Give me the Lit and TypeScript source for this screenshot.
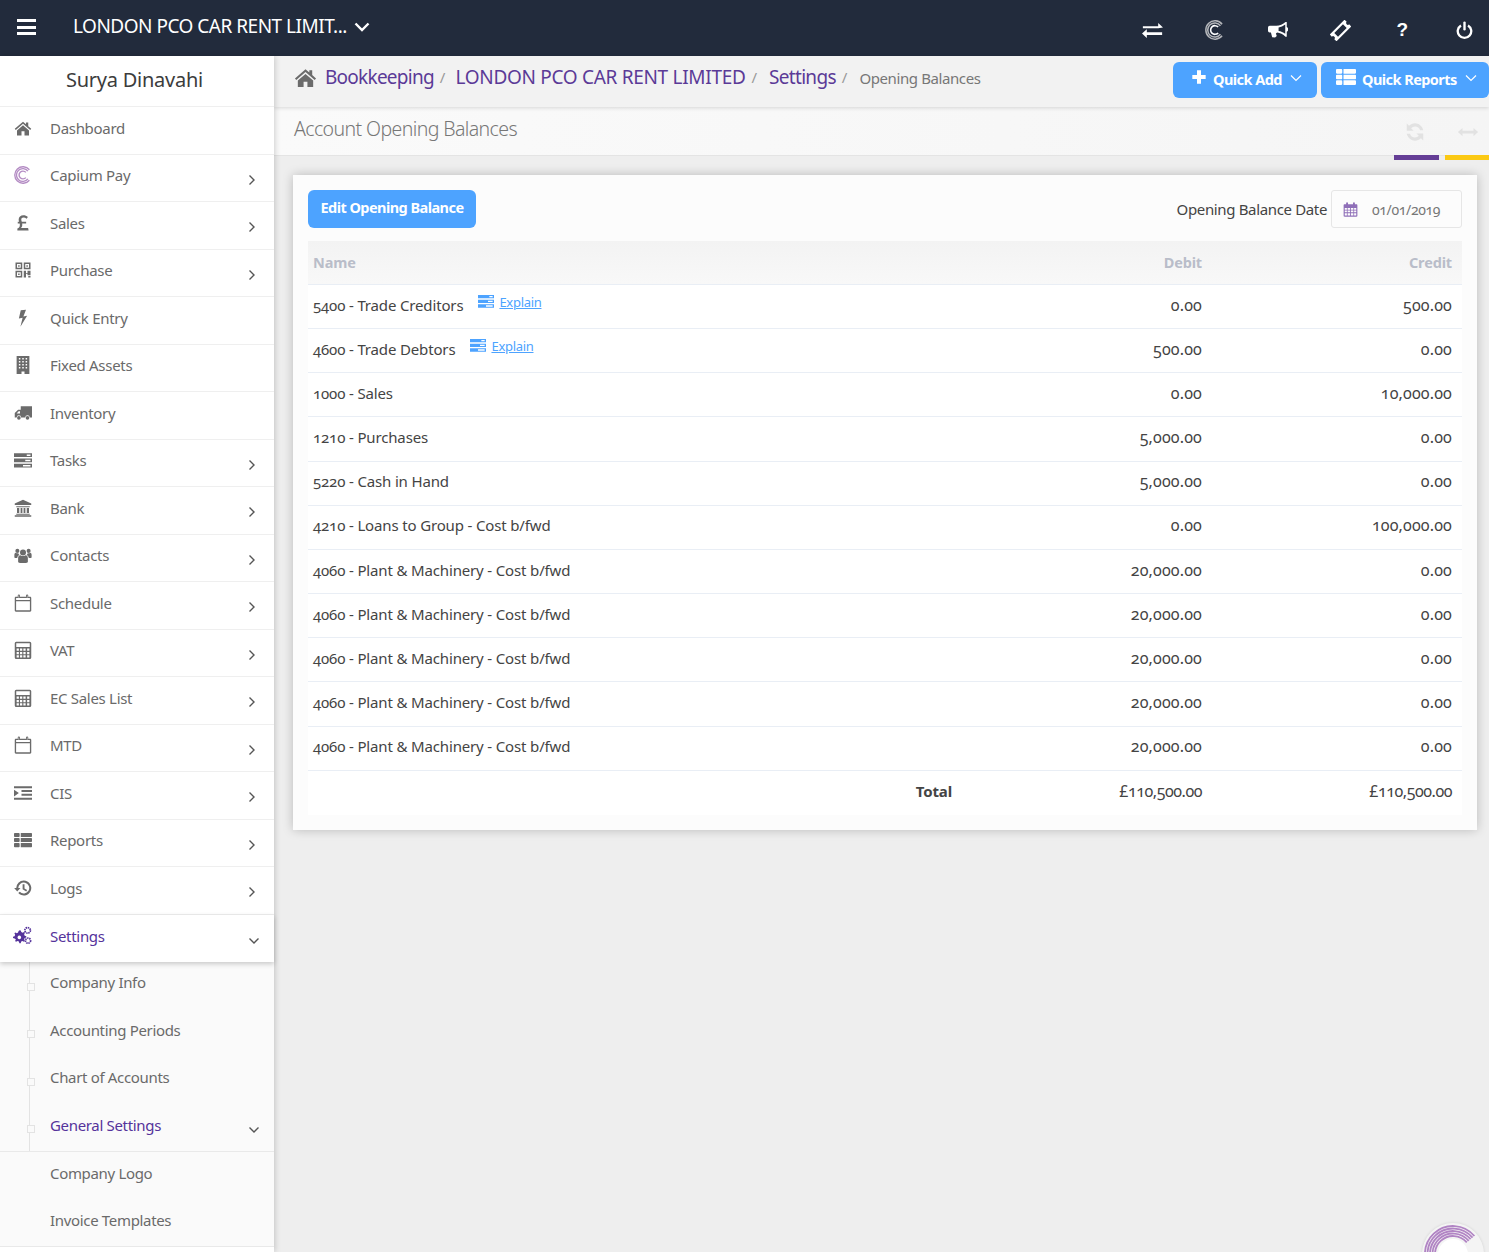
import { LitElement, html, css, svg } from "lit";
import { customElement } from "lit/decorators.js";

const ICONS: Record<string, any> = {
  home: svg`<path d="M12 3.500 1 13l1.400 1.600L12 6.300l9.600 8.300L23 13l-4-3.500V4.500h-3v2.400z"/><path d="M4 15.200V22h6v-5.600h4V22h6v-6.800L12 8.300z"/>`,
  pound: svg`<path d="M19.500 22H4.500v-2.600c2.200-.9 3.300-2.500 3.300-4.800 0-.6-.1-1.200-.2-1.800H5V10.400h1.900C6.500 9.300 6.200 8.400 6.200 7.500 6.200 4 8.900 1.800 12.500 1.800c2.400 0 4.400.8 6 2.100l-1.700 2.500c-1.300-1-2.700-1.600-4.100-1.600-1.900 0-3 1-3 2.600 0 .8.200 1.700.7 3h5.800v2.400h-5.300c.1.600.1 1.100.1 1.700 0 1.700-.7 3.100-1.900 4.200h9.700z"/>`,
  qr: svg`<path fill-rule="evenodd" d="M2 2h9v9H2zM4 4v5h5V4zM5.500 5.500h2v2h-2zM13 2h9v9h-9zM15 4v5h5V4zM16.500 5.500h2v2h-2zM2 13h9v9H2zM4 15v5h5v-5zM5.500 16.500h2v2h-2zM13 13h3v3h2v-3h4v6h-4v-2h-2v5h-3zM19 20h3v2h-3z"/>`,
  bolt: svg`<path d="M16 1 9 1.500 6.500 12.500l5-1L8.500 23.500 17.500 9l-5 1z"/>`,
  building: svg`<path fill-rule="evenodd" d="M3.500 0h17v24H14v-3.500h-4V24H3.500zM6.500 2.500v2h2v-2zM11 2.500v2h2v-2zM15.500 2.500v2h2v-2zM6.500 6.500v2h2v-2zM11 6.500v2h2v-2zM15.500 6.500v2h2v-2zM6.500 10.500v2h2v-2zM11 10.500v2h2v-2zM15.500 10.500v2h2v-2zM6.500 14.500v2h2v-2zM11 14.500v2h2v-2zM15.500 14.500v2h2v-2z"/>`,
  truck: svg`<path fill-rule="evenodd" d="M9 3h15v15h-3a3 3 0 0 0-6 0H9.500a3 3 0 0 0-6 0H1v-6l4.500-4.500H9zM3.500 12.500H8V9.500H6.200z"/><circle cx="6.500" cy="18.500" r="2.400"/><circle cx="18" cy="18.500" r="2.400"/>`,
  tasks: svg`<path fill-rule="evenodd" d="M0 3h24v5H0zM17 4.500v2h5v-2zM0 10h24v5H0zM15 11.500v2h7v-2zM0 17h24v5H0zM12 18.500v2h10v-2z"/>`,
  bank: svg`<path d="M12 1 1 6v2h22V6zM3 9.500h18V11H3zM4 12h3v6.500H4zM8.800 12h2.400v6.500H8.800zM12.800 12h2.400v6.500h-2.400zM17 12h3v6.500h-3zM3 19.500h18V21H3zM1 21.800h22V23.500H1z"/>`,
  users: svg`<circle cx="12" cy="8.500" r="4"/><circle cx="4.500" cy="6.500" r="2.700"/><circle cx="19.500" cy="6.500" r="2.700"/><path d="M5.500 21v-5c0-2.500 1.500-3.800 3.200-3.800 1 .8 2.100 1.200 3.300 1.200s2.300-.4 3.300-1.200c1.700 0 3.200 1.300 3.200 3.800v5c0 .8-1 1.500-2.500 1.500H8c-1.500 0-2.500-.7-2.500-1.500zM.5 11.500c0-1.500 1-2.600 2-2.600.6.500 1.300.8 2 .8.400 0 .8 0 1.200-.2.300 1 .9 1.800 1.500 2.400-1.500.6-2.700 2-2.900 4H1.500c-.6 0-1-.4-1-1zM23.500 11.500c0-1.500-1-2.600-2-2.600-.6.500-1.300.8-2 .8-.400 0-.8 0-1.200-.2-.3 1-.9 1.800-1.500 2.400 1.500.6 2.700 2 2.900 4h2.800c.6 0 1-.4 1-1z"/>`,
  cal: svg`<path fill-rule="evenodd" d="M5 2a1.500 1.500 0 0 1 3 0v1.500h8V2a1.500 1.500 0 0 1 3 0v1.500h2.500c.8 0 1.500.7 1.500 1.500v17c0 .8-.7 1.500-1.500 1.500h-19C1.700 23.500 1 22.800 1 22V5c0-.8.7-1.500 1.500-1.500H5zM2.800 5.300V8h18.400V5.300zM2.800 9.500v12.200h18.400V9.500zM6.200 2v3h.6V2zM17.200 2v3h.6V2z"/>`,
  calg: svg`<path fill-rule="evenodd" d="M5 2a1.500 1.500 0 0 1 3 0v1.500h8V2a1.500 1.500 0 0 1 3 0v1.500h2.500c.8 0 1.500.7 1.500 1.500v17c0 .8-.7 1.500-1.500 1.500h-19C1.700 23.500 1 22.800 1 22V5c0-.8.7-1.500 1.500-1.500H5zM2.800 9.500v2.700h3.400V9.500zM7.400 9.500v2.700h3.900V9.500zM12.700 9.500v2.700h3.900V9.500zM17.800 9.500v2.700h3.400V9.500zM2.800 13.500v3h3.400v-3zM7.400 13.500v3h3.900v-3zM12.700 13.500v3h3.900v-3zM17.800 13.500v3h3.400v-3zM2.800 17.800v3.900h3.400v-3.900zM7.400 17.800v3.900h3.900v-3.900zM12.700 17.800v3.900h3.900v-3.900zM17.800 17.800v3.900h3.400v-3.900z"/>`,
  calc: svg`<path fill-rule="evenodd" d="M3 1h18a2 2 0 0 1 2 2v19a2 2 0 0 1-2 2H3a2 2 0 0 1-2-2V3a2 2 0 0 1 2-2zM3 3v5h18V3zM3.500 10v3h3v-3zM8 10v3h3v-3zM12.500 10v3h3v-3zM17.500 10v3h3v-3zM3.500 14.500v3h3v-3zM8 14.500v3h3v-3zM12.500 14.500v3h3v-3zM17.500 14.500v3h3v-3zM3.500 19v3h3v-3zM8 19v3h3v-3zM12.500 19v3h3v-3zM17.500 19v3h3v-3z"/>`,
  indent: svg`<path d="M0 3h24v2.800H0zM10 8h14v2.800H10zM10 13h14v2.800H10zM0 18.300h24v2.800H0zM0 7.500l6.500 4.500L0 16.500zM0 8h1v8H0z"/>`,
  list: svg`<path d="M0 3.500c0-.5.500-1 1-1h5.500c.5 0 1 .5 1 1v3.500c0 .5-.5 1-1 1H1c-.5 0-1-.5-1-1zM9 2.500h14c.5 0 1 .5 1 1v3.500c0 .5-.5 1-1 1H9zM0 10.200c0-.5.500-1 1-1h5.500c.5 0 1 .5 1 1v3.500c0 .5-.5 1-1 1H1c-.5 0-1-.5-1-1zM9 9.200h14c.5 0 1 .5 1 1v3.500c0 .5-.5 1-1 1H9zM0 17c0-.5.500-1 1-1h5.500c.5 0 1 .5 1 1v3.500c0 .5-.5 1-1 1H1c-.5 0-1-.5-1-1zM9 16h14c.5 0 1 .5 1 1v3.500c0 .5-.5 1-1 1H9z"/>`,
  history: svg`<path d="M13 2a10 10 0 1 1-7.300 16.800l2-1.800A7.300 7.300 0 1 0 5.700 12h2.900L4.300 16.500.2 12h2.800A10 10 0 0 1 13 2z"/><path d="M11.500 7H14v5.500l3.500 2-1.200 2-4.800-2.800z"/>`,
  cogs: svg`<path fill-rule="evenodd" d="M8.500 5.500l1.300.2.700 2 1.500.7 2-.8 1 1-.9 2 .7 1.600 2 .7v1.600l-2 .7-.7 1.600.9 2-1.100 1.100-2-.9-1.500.7-.7 2-1.600 0-.7-2-1.600-.7-2 .9-1.100-1.100.9-2L2 15.800l-2-.7v-1.600l2-.7.700-1.600-.9-2 1.100-1.100 2 .9 1.500-.7.7-2zM8 12a2.300 2.300 0 1 0 .01 0z"/><circle cx="18.500" cy="5.500" r="3.500" fill="none" stroke="currentColor" stroke-width="2.200" stroke-dasharray="1.800 .9"/><circle cx="19" cy="18.500" r="3.200" fill="none" stroke="currentColor" stroke-width="2.200" stroke-dasharray="1.800 .9"/>`,
  exchange: svg`<path d="M1 7h17.500V3.500L24 8.500 18.500 9.500H1zM23 14H5.500v-3.500L0 15.500l5.500 5V17H23z"/>`,
  bullhorn: svg`<path fill-rule="evenodd" d="M22.500 2.500v6a3 3 0 0 1 0 5.500v6h-1.500c-3-3-6.500-4.500-10-5l-1.500 1.300 1 3-2 1.700-3.500-.4-1.500-5.600H2a2 2 0 0 1-2-2V9a2 2 0 0 1 2-2h8c4-.3 8-1.800 11-4.500zM20.700 5.500c-2.600 2-5.200 3-8 3.400v4.200c2.800.4 5.400 1.500 8 3.400z"/>`,
  ticket: svg`<path fill-rule="evenodd" transform="rotate(-45 12 12)" d="M0 6.500h24v3.500a2 2 0 0 0 0 4v3.500H0V14a2 2 0 0 0 0-4zM5 9v6h14V9z"/>`,
  power: svg`<path d="M6.800 4.300a10 10 0 1 0 10.400 0l-1.500 2.500a7.100 7.100 0 1 1-7.400 0z"/><rect x="10.500" y="0.500" width="3" height="11.500" rx="1.500"/>`,
  plus: svg`<path d="M9 2h6v7h7v6h-7v7H9v-7H2V9h7z"/>`,
  refresh: svg`<path d="M21 10C20 5.500 16 2.500 12 2.500c-2.500 0-4.700 1-6.500 2.700L3 2.700V10.500h7.500L7.800 7.800A6.500 6.500 0 0 1 12 6c2.700 0 5 1.500 5.500 4zM3 14c1 4.500 5 7.500 9 7.500 2.500 0 4.700-1 6.500-2.700l2.500 2.500V13.500h-7.500l2.700 2.700A6.500 6.500 0 0 1 12 18c-2.700 0-5-1.500-5.500-4z"/>`,
  arrows: svg`<path d="M1 12l5-4.500v3h12v-3l5 4.500-5 4.500v-3H6v3z"/>`,
};

const capium = (size: number, color: string, inner: string) => html`<svg width=${size} height=${size} viewBox="0 0 24 24" fill="none" stroke=${color}>
  <path d="M20.500 5A11 11 0 1 0 20.500 19" stroke-width="1.800"/>
  <path d="M18.500 6.800A8.500 8.500 0 1 0 18.500 17.200" stroke-width="1.800"/>
  <path d="M15.800 8.500A5.200 5.200 0 1 0 15.800 15.500" stroke-width="1.900" stroke=${inner}/>
</svg>`;

const icon = (name: string, size = 18, cls = "") =>
  html`<svg class=${cls} width=${size} height=${size} viewBox="0 0 24 24" fill="currentColor" aria-hidden="true">${ICONS[name]}</svg>`;

const chev = (down = false) =>
  html`<svg class="chev" width="12" height="12" viewBox="0 0 12 12" fill="none" stroke="currentColor" stroke-width="1.400"><path d=${down ? "M1.500 3.500 6 8l4.500-4.500" : "M3.500 1.500 8 6l-4.500 4.500"}/></svg>`;

const MENU: [string, string, boolean][] = [
  ["home", "Dashboard", false],
  ["cap", "Capium Pay", true],
  ["pound", "Sales", true],
  ["qr", "Purchase", true],
  ["bolt", "Quick Entry", false],
  ["building", "Fixed Assets", false],
  ["truck", "Inventory", false],
  ["tasks", "Tasks", true],
  ["bank", "Bank", true],
  ["users", "Contacts", true],
  ["cal", "Schedule", true],
  ["calc", "VAT", true],
  ["calc", "EC Sales List", true],
  ["cal", "MTD", true],
  ["indent", "CIS", true],
  ["list", "Reports", true],
  ["history", "Logs", true],
];

const ROWS: [string, string, string, boolean][] = [
  ["5400 - Trade Creditors", "0.00", "500.00", true],
  ["4600 - Trade Debtors", "500.00", "0.00", true],
  ["1000 - Sales", "0.00", "10,000.00", false],
  ["1210 - Purchases", "5,000.00", "0.00", false],
  ["5220 - Cash in Hand", "5,000.00", "0.00", false],
  ["4210 - Loans to Group - Cost b/fwd", "0.00", "100,000.00", false],
  ["4060 - Plant & Machinery - Cost b/fwd", "20,000.00", "0.00", false],
  ["4060 - Plant & Machinery - Cost b/fwd", "20,000.00", "0.00", false],
  ["4060 - Plant & Machinery - Cost b/fwd", "20,000.00", "0.00", false],
  ["4060 - Plant & Machinery - Cost b/fwd", "20,000.00", "0.00", false],
  ["4060 - Plant & Machinery - Cost b/fwd", "20,000.00", "0.00", false],
];

@customElement("app-root")
export class AppRoot extends LitElement {
  static styles = css`
    :host {
      display: block;
      height: 1252px;
      overflow: hidden;
      position: relative;
      background: #eeeeee;
      font-family: "Noto Sans", "Open Sans", sans-serif;
      font-variant-numeric: oldstyle-nums;
      color: #444;
      font-size: 15px;
    }
    * { box-sizing: border-box; }
    .top {
      height: 56px;
      background: #222b3c;
      color: #fff;
      display: flex;
      align-items: center;
      padding-left: 17px;
    }
    .burger { display: flex; flex-direction: column; gap: 3.500px; width: 19px; margin-right: 37px; margin-bottom: 2px; }
    .burger i { display: block; height: 3px; background: #fff; }
    .co { font-size: 19px; letter-spacing: -0.5px; white-space: nowrap; padding-bottom: 4px; }
    .cochev { margin-left: 7px; display: flex; padding-bottom: 3px; }
    .topicons { margin-left: auto; margin-right: -7px; display: flex; align-items: center; padding-top: 4px; }
    .topicons > span { width: 62.400px; display: flex; justify-content: center; }
    .q { font-family: "Liberation Sans", sans-serif; font-weight: 700; font-size: 19px; line-height: 20px; }

    .body { display: flex; height: 1196px; }
    .side {
      width: 274px;
      flex: none;
      background: #fff;
      box-shadow: 1px 0 6px rgba(0,0,0,.18);
      position: relative;
      z-index: 2;
    }
    .user {
      height: 51px;
      display: flex;
      align-items: center;
      justify-content: center;
      font-size: 20px;
      letter-spacing: -0.25px;
      color: #3c3c3c;
      border-bottom: 1px solid #efefef;
      padding: 0 5px 3px 0;
    }
    .item {
      height: 47.500px;
      border-bottom: 1px solid #efefef;
      display: flex;
      align-items: center;
      color: #6a6a6a;
      font-size: 15px;
      letter-spacing: -0.3px;
      padding-bottom: 5px;
      position: relative;
    }
    .ic { width: 50px; padding-right: 5px; flex: none; display: flex; justify-content: center; color: #6b6b6b; }
    .item .chev, .sub .chev { position: absolute; left: 246px; top: 19px; color: #555; }
    .item.open { color: #55339b; border: 0; box-shadow: 0 2px 5px rgba(0,0,0,.2); height: 47px; z-index: 1; }
    .item.open .ic { color: #55339b; }
    .item.open .chev, .sub .chev { left: 248px; top: 20px; }
    .subs { background: #fafafa; position: relative; }
    .subs::before { content: ""; position: absolute; left: 29px; top: 0; height: 190px; width: 1px; background: #e3e3e3; }
    .sub {
      height: 47.600px;
      display: flex;
      align-items: center;
      padding-left: 50px;
      padding-bottom: 6px;
      color: #6a6a6a;
      letter-spacing: -0.33px;
      position: relative;
    }
    .sub.dot::before { content: ""; position: absolute; left: 27px; top: 21px; width: 6px; height: 6px; border: 1px solid #e3e3e3; background: #fafafa; }
    .sub.active { color: #55339b; border-bottom: 1px solid #e9e9e9; }
    .sub.end { border-bottom: 1px solid #e9e9e9; }

    .main { flex: 1; min-width: 0; }
    .crumbbar {
      height: 51px;
      background: #f2f2f2;
      box-shadow: 0 1px 4px rgba(0,0,0,.14);
      display: flex;
      align-items: center;
      padding-left: 20px;
      position: relative;
      z-index: 1;
    }
    .crumbs { display: flex; align-items: center; padding-bottom: 9px; }
    .crumb { color: #5b3a97; font-size: 19px; white-space: nowrap; }
    .c1 { letter-spacing: -0.75px; }
    .c2 { letter-spacing: -0.3px; }
    .c3 { letter-spacing: -0.7px; }
    .sep { color: #999; font-size: 15px; margin: 0 12px 0 6px; }
    .c1 + .sep { margin-right: 10px; }
    .homei { color: #6b6b6b; margin-right: 8px; display: flex; }
    .last { color: #777; font-size: 15px; letter-spacing: -0.4px; position: relative; top: 1px; }
    .btns { margin-left: auto; display: flex; gap: 4px; position: relative; top: -2px; }
    .btn {
      background: #4da3ff;
      color: #fff;
      border: 0;
      border-radius: 6px;
      font: inherit;
      font-weight: 700;
      font-size: 14.500px;
      letter-spacing: -0.55px;
      display: flex;
      align-items: center;
      height: 36px;
      padding: 0;
    }
    .btn span { position: relative; top: -1px; }
    .qa { width: 144px; padding-left: 18px; gap: 6px; }
    .qr { width: 168px; padding-left: 15px; gap: 6px; }
    .btn svg { position: relative; top: -3px; }
    .btn .small { margin-left: 2px; top: -2px; }
    .title {
      height: 49px;
      background: linear-gradient(90deg, #fafafa, #f5f5f5);
      border-bottom: 1px solid #e4e4e4;
      display: flex;
      align-items: center;
      padding-left: 20px;
      font-size: 19.500px;
      font-weight: 300;
      letter-spacing: -0.6px;
      color: #777;
      position: relative;
      padding-bottom: 6px;
    }
    .title .tools { position: absolute; inset: 0; color: #e2e2e2; }
    .tools svg { position: absolute; top: 14px; }
    .tools .r { left: 1130px; }
    .tools .a { left: 1183px; }
    .bar { position: absolute; top: 48px; height: 5px; }
    .bar.p { left: 1120px; width: 45px; background: #653e96; }
    .bar.y { left: 1171px; width: 44px; background: #fbc914; }

    .card {
      margin: 19px 12px 0 19px;
      background: #fcfcfc;
      padding: 15px;
      height: 655px;
      box-shadow: 0 0 10px rgba(0,0,0,.22);
    }
    .cardtop { display: flex; align-items: center; height: 38px; margin-bottom: 13px; }
    .edit { width: 168px; height: 38px; justify-content: center; padding-bottom: 5px; }
    .dl { margin-left: auto; margin-right: 4px; color: #444; letter-spacing: -0.35px; }
    .date {
      width: 131px;
      height: 38px;
      border: 1px solid #e6e6e6;
      border-radius: 3px;
      display: flex;
      align-items: center;
      padding-left: 11px;
      gap: 14px;
      color: #777;
      font-size: 14px;
      letter-spacing: -0.35px;
    }
    .date svg { color: #8f6fb8; }
    .row {
      display: grid;
      grid-template-columns: 1fr 250px 250px;
      height: 44.170px;
      align-items: center;
      background: #fff;
      border-bottom: 1px solid #e9eef5;
      color: #444;
      padding-bottom: 4px;
      letter-spacing: -0.15px;
    }
    .row > div { padding: 0 10px 0 5px; white-space: nowrap; }
    .row > .n { text-align: right; font-size: 16px; letter-spacing: 0.15px; }
    .row.head {
      height: 44px;
      background: linear-gradient(180deg, #f3f3f3, #f8f8f8);
      color: #b9bdc9;
      font-weight: 700;
      font-size: 14.500px;
      padding-bottom: 2px;
    }
    .row.head > .n { font-size: 14.500px; letter-spacing: -0.15px; }
    .row.foot { border: 0; }
    .row.foot .t { font-weight: 700; text-align: right; }
    .row.foot > .n { letter-spacing: -0.45px; }
    .ex { color: #4da3ff; text-decoration: underline; font-size: 13px; letter-spacing: -0.3px; margin-left: 15px; display: inline-flex; align-items: center; gap: 5px; position: relative; top: -1px; }
    .ex svg { color: #4da3ff; position: relative; top: -1px; }
    .bubble {
      position: absolute;
      left: 1422px;
      top: 1223px;
      width: 62px;
      height: 62px;
      border-radius: 50%;
      background: #f4f4f4;
      box-shadow: 0 0 3px rgba(0,0,0,.12);
    }
    .bubble svg { display: block; }
  `;

  render() {
    return html`
      <div class="top">
        <div class="burger"><i></i><i></i><i></i></div>
        <div class="co">LONDON PCO CAR RENT LIMIT...</div>
        <span class="cochev"><svg width="16" height="12" viewBox="0 0 16 12" fill="none" stroke="#fff" stroke-width="2.400"><path d="M1.500 2.500 8 9l6.500-6.500"/></svg></span>
        <div class="topicons">
          <span>${icon("exchange", 21)}</span>
          <span>${capium(20, "#b4b6ba", "#fff")}</span>
          <span>${icon("bullhorn", 20)}</span>
          <span>${icon("ticket", 21)}</span>
          <span class="q">?</span>
          <span>${icon("power", 19)}</span>
        </div>
      </div>
      <div class="body">
        <aside class="side">
          <div class="user">Surya Dinavahi</div>
          ${MENU.map(
            ([ic, label, more]) => html`<div class="item">
              <span class="ic">${ic === "cap" ? capium(18, "#b48cc4", "#b48cc4") : icon(ic, 18)}</span>
              ${label}${more ? chev() : ""}
            </div>`
          )}
          <div class="item open"><span class="ic">${icon("cogs", 19)}</span>Settings${chev(true)}</div>
          <div class="subs">
            <div class="sub dot">Company Info</div>
            <div class="sub dot">Accounting Periods</div>
            <div class="sub dot">Chart of Accounts</div>
            <div class="sub dot active">General Settings${chev(true)}</div>
            <div class="sub">Company Logo</div>
            <div class="sub end">Invoice Templates</div>
          </div>
        </aside>
        <main class="main">
          <div class="crumbbar">
            <div class="crumbs">
              <span class="homei">${icon("home", 23)}</span>
              <span class="crumb c1">Bookkeeping</span><span class="sep">/</span>
              <span class="crumb c2">LONDON PCO CAR RENT LIMITED</span><span class="sep">/</span>
              <span class="crumb c3">Settings</span><span class="sep">/</span>
              <span class="last">Opening Balances</span>
            </div>
            <div class="btns">
              <button class="btn qa">${icon("plus", 16)}<span>Quick Add</span><svg class="small" width="12" height="8" viewBox="0 0 12 8" fill="none" stroke="#fff" stroke-width="1.200"><path d="M1 1.500 6 6.500l5-5"/></svg></button>
              <button class="btn qr">${icon("list", 20)}<span>Quick Reports</span><svg class="small" width="12" height="8" viewBox="0 0 12 8" fill="none" stroke="#fff" stroke-width="1.200"><path d="M1 1.500 6 6.500l5-5"/></svg></button>
            </div>
          </div>
          <div class="title">
            Account Opening Balances
            <div class="tools">${icon("refresh", 22, "r")}${icon("arrows", 22, "a")}</div>
            <div class="bar p"></div><div class="bar y"></div>
          </div>
          <section class="card">
            <div class="cardtop">
              <button class="btn edit">Edit Opening Balance</button>
              <span class="dl">Opening Balance Date</span>
              <div class="date">${icon("calg", 15)}01/01/2019</div>
            </div>
            <div class="row head"><div>Name</div><div class="n">Debit</div><div class="n">Credit</div></div>
            ${ROWS.map(
              ([name, d, c, ex]) => html`<div class="row">
                <div>${name}${ex ? html`<span class="ex">${icon("tasks", 16)}Explain</span>` : ""}</div>
                <div class="n">${d}</div><div class="n">${c}</div>
              </div>`
            )}
            <div class="row foot"><div class="t">Total</div><div class="n">£110,500.00</div><div class="n">£110,500.00</div></div>
          </section>
        </main>
      </div>
      <div class="bubble">
        <svg width="62" height="62" viewBox="0 0 62 62" fill="none" stroke="#b184c4" stroke-width="1.800">
          <path d="M52.400 13A28 28 0 1 0 52.400 49"/>
          <path d="M50.500 14.600A25.500 25.500 0 1 0 50.500 47.400"/>
          <path d="M48.600 16.200A23 23 0 1 0 48.600 45.800"/>
          <path d="M46.700 17.800A20.500 20.500 0 1 0 46.700 44.200"/>
          <path d="M44.800 19.400A18 18 0 1 0 44.800 42.600"/>
          <circle cx="31" cy="31" r="15" fill="#fff" stroke="none"/>
        </svg>
      </div>
    `;
  }
}
